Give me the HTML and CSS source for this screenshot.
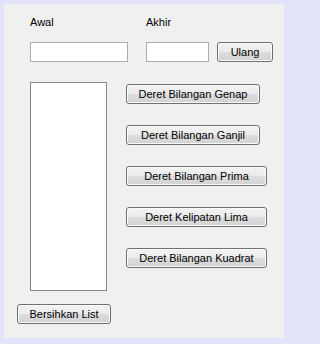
FILE: index.html
```html
<!DOCTYPE html>
<html>
<head>
<meta charset="utf-8">
<link rel="stylesheet" href="styles.css">
</head>
<body>
<div class="frame">
  <div class="panel">
    <div class="labels">
      <span class="label label-awal">Awal</span>
      <span class="label">Akhir</span>
    </div>
    <div class="inputs">
      <input class="field field-awal" type="text">
      <input class="field field-akhir" type="text">
      <button class="btn btn-ulang">Ulang</button>
    </div>
    <div class="main">
      <div class="listbox"></div>
      <div class="actions">
        <button class="btn btn-short">Deret Bilangan Genap</button>
        <button class="btn btn-short">Deret Bilangan Ganjil</button>
        <button class="btn btn-long">Deret Bilangan Prima</button>
        <button class="btn btn-long">Deret Kelipatan Lima</button>
        <button class="btn btn-long">Deret Bilangan Kuadrat</button>
      </div>
    </div>
    <div class="footer">
      <button class="btn btn-clear">Bersihkan List</button>
    </div>
  </div>
</div>
</body>
</html>
```
FILE: styles.css
```css
* { box-sizing: border-box; }
html, body { margin: 0; padding: 0; }
body {
  font-family: "Liberation Sans", Arial, sans-serif;
  font-size: 11px;
  color: #000;
  background: #e3e3fb;
}
.frame {
  width: 290px;
  height: 344px;
  padding: 4px 6px 6px 4px;
  background: #e3e3fb;
}
.panel {
  height: 100%;
  background: #f0f0f0;
  padding: 12px 0 0 26px;
}
.labels {
  display: flex;
  height: 13px;
  line-height: 13px;
}
.label-awal { width: 116px; }
.inputs {
  display: flex;
  margin-top: 13px;
  height: 20px;
}
.field {
  height: 20px;
  border: 1px solid #abadb3;
  background: #fff;
  margin: 0;
  padding: 0;
  font: inherit;
}
.field-awal { width: 98px; }
.field-akhir { width: 63px; margin-left: 18px; }
.btn {
  height: 20px;
  margin: 0;
  padding: 0;
  border: 1px solid #707070;
  border-radius: 3px;
  background: linear-gradient(#f3f3f3 0%, #ebebeb 48%, #dddddd 52%, #d2d2d2 100%);
  box-shadow: inset 0 0 0 1px #fbfbfb;
  font: inherit;
  color: #000;
  line-height: 18px;
  text-align: center;
}
.btn-ulang { width: 56px; margin-left: 8px; }
.main {
  display: flex;
  margin-top: 20px;
}
.listbox {
  width: 77px;
  height: 209px;
  border: 1px solid #828790;
  background: #fff;
}
.actions {
  display: flex;
  flex-direction: column;
  align-items: flex-start;
  gap: 21px;
  margin-left: 19px;
  padding-top: 2px;
}
.btn-short { width: 134px; }
.btn-long { width: 141px; }
.footer {
  margin-top: 13px;
  margin-left: -13px;
}
.btn-clear { width: 94px; }
```
